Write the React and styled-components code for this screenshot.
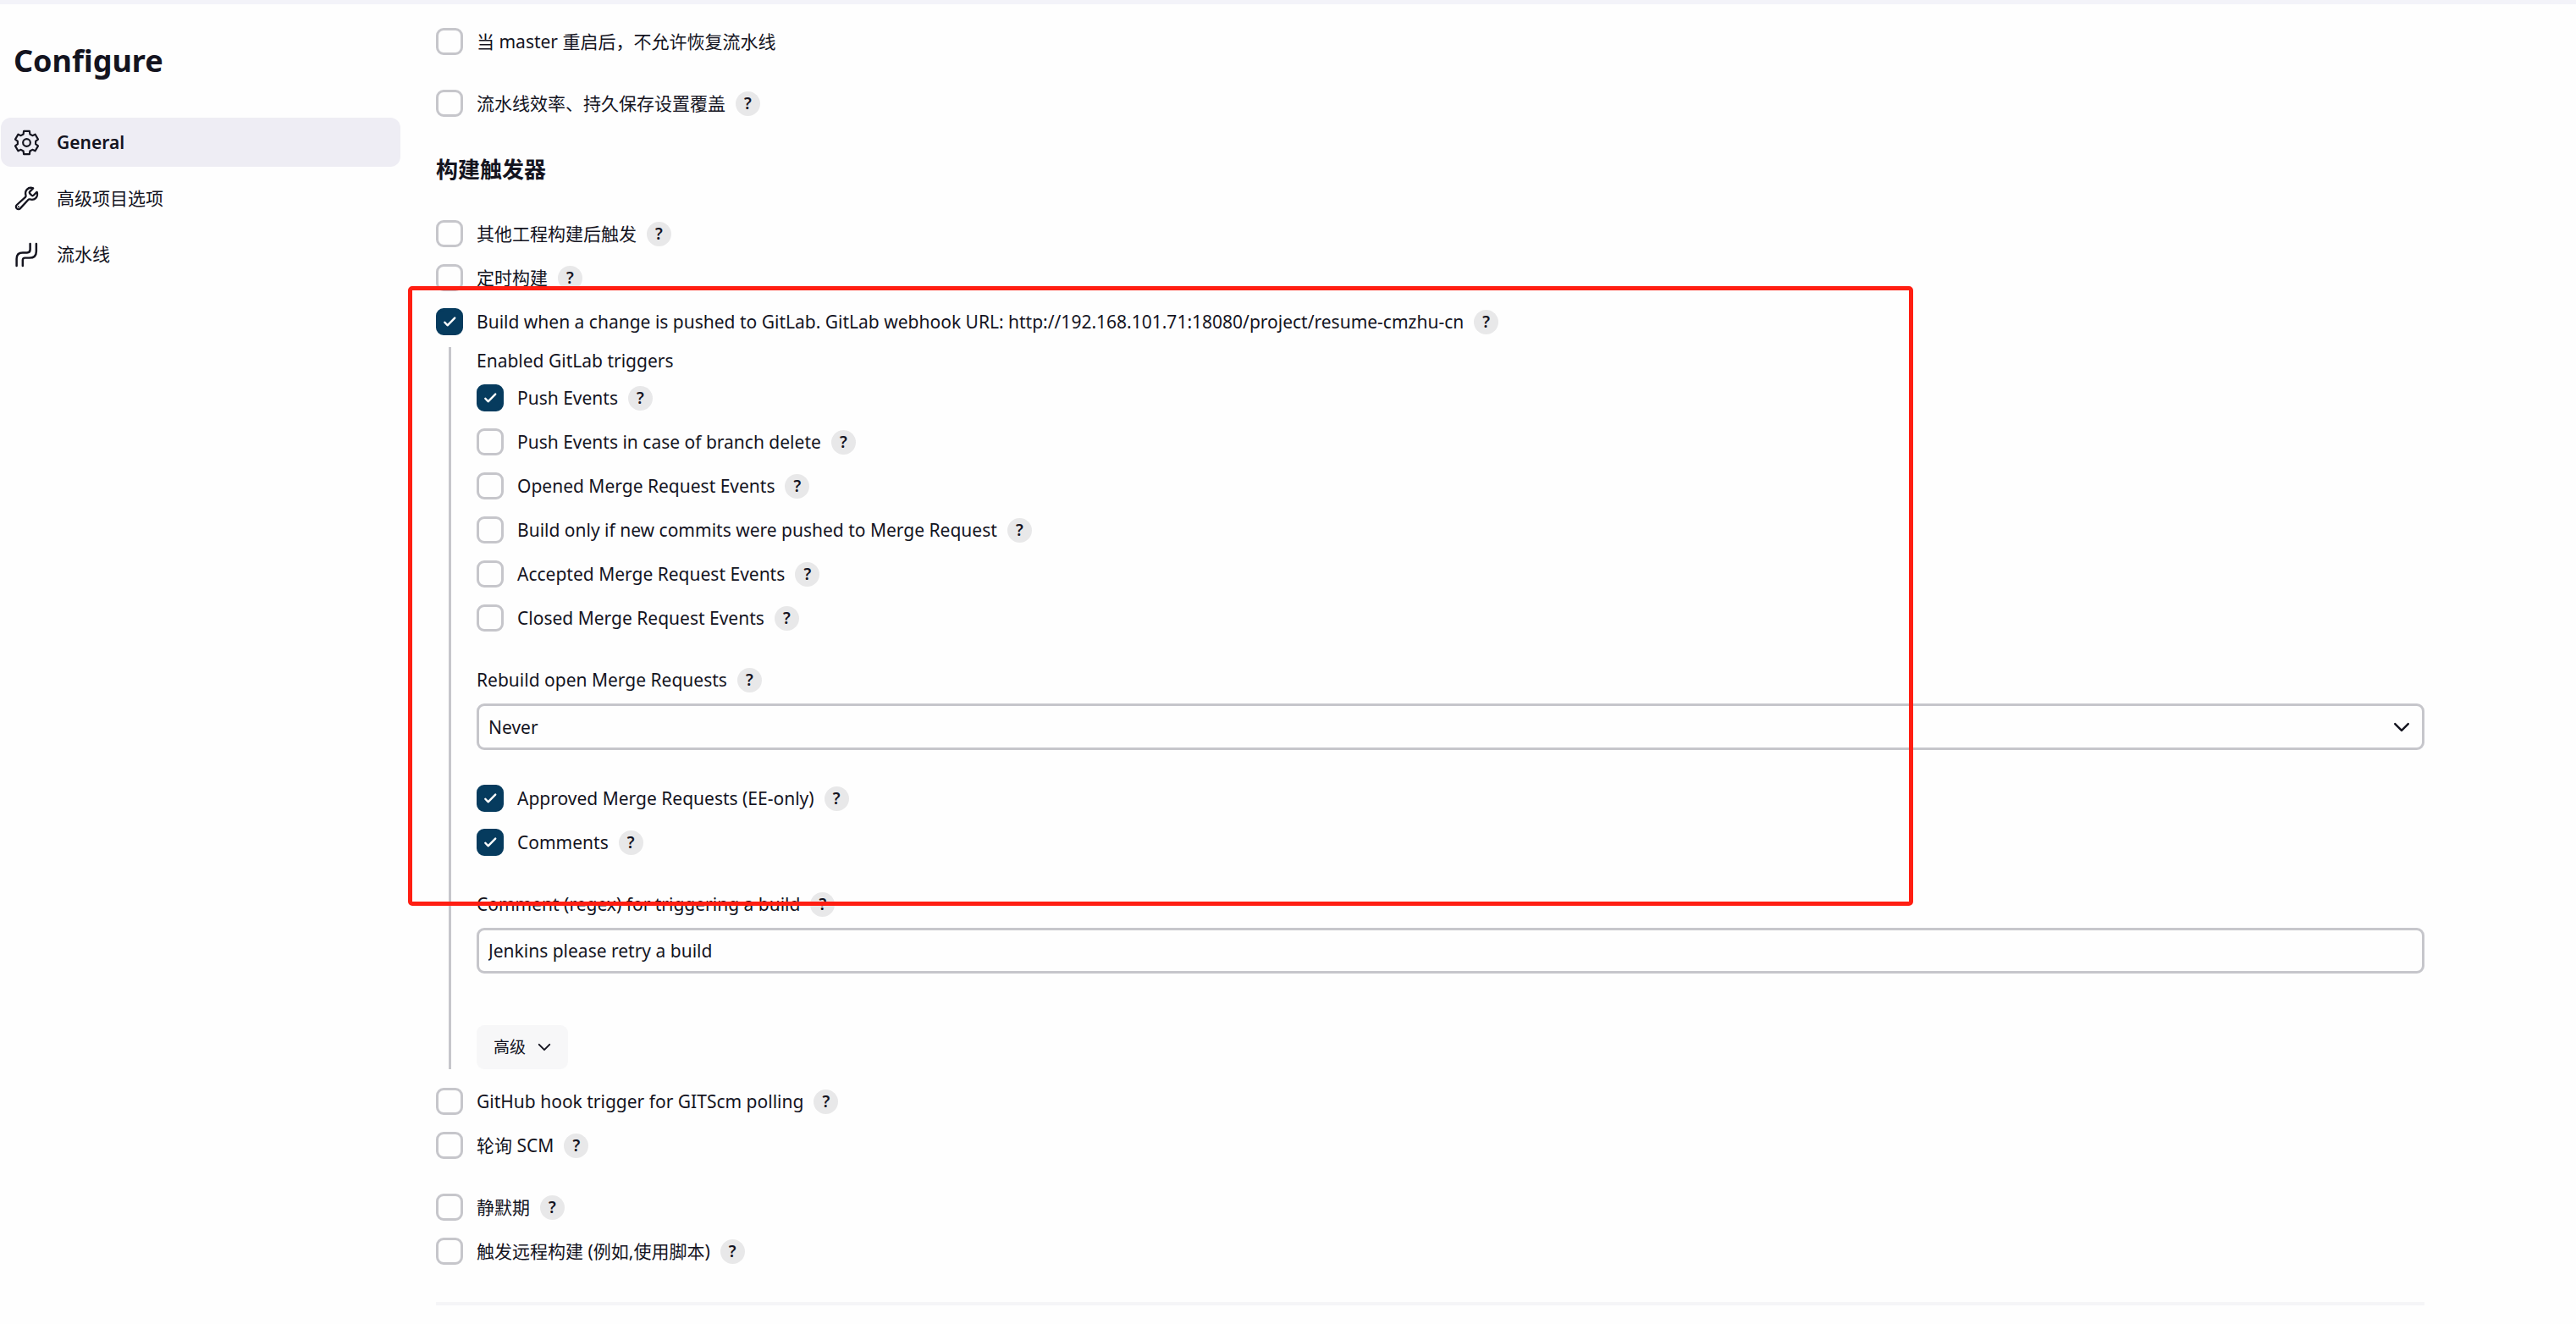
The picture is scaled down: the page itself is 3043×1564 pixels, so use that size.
import React, { useState } from "react";
import styled, { createGlobalStyle } from "styled-components";
import { IoBuildOutline } from "react-icons/io5";

const GlobalStyle = createGlobalStyle`
  *, *::before, *::after { box-sizing: border-box; }
  body {
    margin: 0;
    background: #fefefe;
    color: #14141f;
    font-family: "Noto Sans", "Noto Sans CJK SC", sans-serif;
    font-size: 21px;
    line-height: 32px;
  }
  button, input, select { font: inherit; color: inherit; margin: 0; }
`;

const TopBar = styled.div`
  height: 5px;
  background: #f3f3f9;
`;

const Page = styled.div`
  display: grid;
  grid-template-columns: 473px minmax(0, 1fr);
  column-gap: 42px;
  padding-right: 179px;
`;

const Sidebar = styled.aside`
  padding: 42px 0 0 1px;
`;

const Title = styled.h1`
  margin: 0 0 42px 15px;
  font-size: 36px;
  line-height: 50px;
  font-weight: 700;
`;

const Nav = styled.nav`
  display: flex;
  flex-direction: column;
  gap: 8px;
`;

const NavLink = styled.a`
  display: flex;
  align-items: center;
  gap: 20px;
  height: 58px;
  padding: 0 15px;
  border-radius: 12px;
  color: inherit;
  text-decoration: none;
  font-weight: ${(p) => (p.$active ? 600 : 400)};
  background: ${(p) => (p.$active ? "#eeedf4" : "transparent")};

  svg { width: 31px; height: 31px; flex: none; }
`;

const WrenchIcon = styled(IoBuildOutline)`
  path { stroke-width: 38px; }
`;

const Main = styled.main`
  position: relative;
  padding-top: 28px;
`;

const Stack = styled.div`
  display: flex;
  flex-direction: column;
  gap: ${(p) => p.$gap}px;
`;

const SectionTitle = styled.h2`
  margin: 46px 0 44px;
  font-size: 26px;
  line-height: 32px;
  font-weight: 700;
`;

const Row = styled.div`
  display: flex;
  align-items: center;
  gap: 12px;
  height: 32px;
`;

const CheckLabel = styled.label`
  display: flex;
  align-items: center;
  gap: 16px;
  cursor: pointer;
`;

const BoxWrap = styled.span`
  display: grid;
  width: 32px;
  height: 32px;

  > * { grid-area: 1 / 1; }
  svg { width: 32px; height: 32px; pointer-events: none; z-index: 1; }
`;

const Box = styled.input`
  appearance: none;
  width: 32px;
  height: 32px;
  border: 3px solid #c6c6cb;
  border-radius: 9px;
  background: #fefefe;

  &:checked { background: #063b5e; border-color: #063b5e; }
`;

const HelpButton = styled.button`
  display: grid;
  place-items: center;
  width: 29px;
  height: 29px;
  padding: 0;
  border: 0;
  border-radius: 50%;
  background: #e8e8e9;
  font-size: 19px;
  line-height: 28px;
  font-weight: 600;
`;

const Nested = styled.div`
  margin: 14px 0 22px 15px;
  padding-left: 30px;
  border-left: 3px solid #c6c6cb;
`;

const TriggerGroup = styled.fieldset`
  display: flex;
  flex-direction: column;
  gap: 12px;
  min-width: 0;
  margin: 0;
  padding: 0;
  border: 0;
`;

const Legend = styled.legend`
  padding: 0 0 12px;
`;

const SelectWrap = styled.div`
  position: relative;

  svg {
    position: absolute;
    top: 0;
    bottom: 0;
    right: 17px;
    margin: auto 0;
    pointer-events: none;
  }
`;

const control = `
  display: block;
  width: 100%;
  padding: 0 11px;
  border: 3px solid #c6c6cb;
  border-radius: 9px;
  background: #fefefe;
`;

const Select = styled.select`
  ${control}
  appearance: none;
  height: 55px;
`;

const TextInput = styled.input`
  ${control}
  height: 54px;
`;

const AdvancedButton = styled.button`
  display: flex;
  align-items: center;
  gap: 14px;
  height: 52px;
  margin-top: 20px;
  padding: 0 20px;
  border: 0;
  border-radius: 9px;
  background: #f7f7f8;
  font-size: 19px;
  width: max-content;
`;

const Divider = styled.hr`
  height: 4px;
  margin: 44px 0 0;
  border: 0;
  background: #f5f5f7;
`;

const Highlight = styled.div`
  position: absolute;
  top: 333px;
  left: -33px;
  width: calc(75% + 16px);
  height: 732px;
  border: 5px solid #ff1e12;
  border-radius: 5px;
  pointer-events: none;
`;

const Chevron = ({ size }) => (
  <svg width={size} height={size} viewBox="0 0 18 18" fill="none" stroke="currentColor" strokeWidth="2.2" strokeLinecap="round" strokeLinejoin="round" aria-hidden="true">
    <path d="M2 5.5 9 12.5 16 5.5" />
  </svg>
);

// Outline of a six-toothed gear centred on 15,15: each tooth adds two root and two tip points.
const gearPoints = [0, 1, 2, 3, 4, 5]
  .flatMap((tooth) =>
    [[-21, 10.4], [-14, 13.6], [14, 13.6], [21, 10.4]].map(([offset, radius]) => {
      const angle = ((tooth * 60 - 90 + offset) * Math.PI) / 180;
      return `${(15 + radius * Math.cos(angle)).toFixed(2)},${(15 + radius * Math.sin(angle)).toFixed(2)}`;
    })
  )
  .join(" ");

const GearIcon = () => (
  <svg viewBox="0 0 30 30" fill="none" stroke="currentColor" strokeWidth="2.1" strokeLinejoin="round" aria-hidden="true">
    <polygon points={gearPoints} />
    <circle cx="15" cy="15" r="4.2" />
  </svg>
);

const PipelineIcon = () => (
  <svg viewBox="0 0 30 30" fill="none" stroke="currentColor" strokeWidth="2.4" strokeLinecap="round" aria-hidden="true">
    <path d="M3.500 28V20Q3.500 13 10.500 13H15.500Q19 13 19 9.500V3" />
    <path d="M10.500 28V21.500Q10.500 19 13 19H18Q26 19 26 11.500V3" />
  </svg>
);

const Help = ({ about }) => (
  <HelpButton type="button" aria-label={`Help: ${about}`}>?</HelpButton>
);

function CheckRow({ text, checked = false, help = true }) {
  const [on, setOn] = useState(checked);
  return (
    <Row>
      <CheckLabel>
        <BoxWrap>
          <Box type="checkbox" checked={on} onChange={(e) => setOn(e.target.checked)} />
          {on && (
            <svg viewBox="0 0 32 32" fill="none" stroke="#fff" strokeWidth="2.4" strokeLinecap="round" strokeLinejoin="round" aria-hidden="true">
              <path d="M10.300 16.800 13.600 20.300 22.200 11.600" />
            </svg>
          )}
        </BoxWrap>
        {text}
      </CheckLabel>
      {help && <Help about={text} />}
    </Row>
  );
}

export default function App() {
  return (
    <>
      <GlobalStyle />
      <TopBar />
      <Page>
        <Sidebar>
          <Title>Configure</Title>
          <Nav>
            <NavLink href="#general" $active><GearIcon />General</NavLink>
            <NavLink href="#advanced"><WrenchIcon />高级项目选项</NavLink>
            <NavLink href="#pipeline"><PipelineIcon />流水线</NavLink>
          </Nav>
        </Sidebar>
        <Main>
          <Stack $gap={41}>
            <CheckRow text="当 master 重启后，不允许恢复流水线" help={false} />
            <CheckRow text="流水线效率、持久保存设置覆盖" />
          </Stack>
          <SectionTitle>构建触发器</SectionTitle>
          <Stack $gap={20}>
            <CheckRow text="其他工程构建后触发" />
            <CheckRow text="定时构建" />
            <CheckRow checked text="Build when a change is pushed to GitLab. GitLab webhook URL: http://192.168.101.71:18080/project/resume-cmzhu-cn" />
          </Stack>
          <Nested>
            <Stack $gap={41}>
              <TriggerGroup>
                <Legend>Enabled GitLab triggers</Legend>
                <Stack $gap={20}>
                  <CheckRow checked text="Push Events" />
                  <CheckRow text="Push Events in case of branch delete" />
                  <CheckRow text="Opened Merge Request Events" />
                  <CheckRow text="Build only if new commits were pushed to Merge Request" />
                  <CheckRow text="Accepted Merge Request Events" />
                  <CheckRow text="Closed Merge Request Events" />
                </Stack>
              </TriggerGroup>
              <Stack $gap={12}>
                <Row>
                  <label htmlFor="rebuild">Rebuild open Merge Requests</label>
                  <Help about="Rebuild open Merge Requests" />
                </Row>
                <SelectWrap>
                  <Select id="rebuild" defaultValue="never">
                    <option value="never">Never</option>
                  </Select>
                  <Chevron size={20} />
                </SelectWrap>
              </Stack>
              <Stack $gap={20}>
                <CheckRow checked text="Approved Merge Requests (EE-only)" />
                <CheckRow checked text="Comments" />
              </Stack>
              <Stack $gap={12}>
                <Row>
                  <label htmlFor="comment">Comment (regex) for triggering a build</label>
                  <Help about="Comment (regex) for triggering a build" />
                </Row>
                <TextInput id="comment" type="text" defaultValue="Jenkins please retry a build" />
              </Stack>
              <AdvancedButton type="button">高级<Chevron size={16} /></AdvancedButton>
            </Stack>
          </Nested>
          <Stack $gap={41}>
            <Stack $gap={20}>
              <CheckRow text="GitHub hook trigger for GITScm polling" />
              <CheckRow text="轮询 SCM" />
            </Stack>
            <Stack $gap={20}>
              <CheckRow text="静默期" />
              <CheckRow text="触发远程构建 (例如,使用脚本)" />
            </Stack>
          </Stack>
          <Divider />
          <Highlight />
        </Main>
      </Page>
    </>
  );
}
